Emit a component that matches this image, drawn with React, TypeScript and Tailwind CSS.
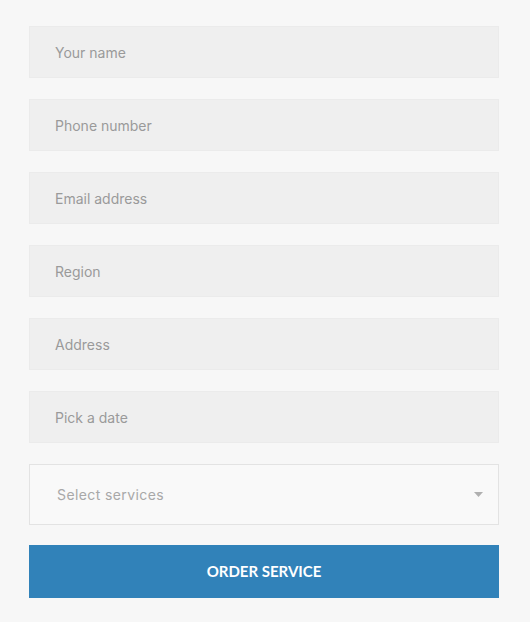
import React from "react";

const fields = ["Your name", "Phone number", "Email address", "Region", "Address", "Pick a date"];

export default function App() {
  return (
    <div className="min-h-[622px] w-full bg-[#f7f7f7] px-[29px] pt-[26px] pb-[24px]" style={{ fontFamily: "Inter, 'Open Sans', sans-serif" }}>
      <div className="flex flex-col gap-[21px]">
        {fields.map((f) => (
          <div key={f} className="h-[52px] w-[470px] bg-[#efefef] border border-[#ebebeb] flex items-center pl-[25px] text-[14px] text-[#9a9a9a]">
            {f}
          </div>
        ))}
        <div className="h-[61px] w-[470px] bg-[#f9f9f9] border border-[#e3e3e3] flex items-center justify-between pl-[27px] pr-[15px] text-[14px] text-[#a8a8a8] tracking-[0.4px]">
          <span>Select services</span>
          <svg width="9" height="5" viewBox="0 0 9 5"><path d="M0 0h9L4.5 5z" fill="#b0b0b0" /></svg>
        </div>
      </div>
      <div className="mt-[20px] h-[53px] w-[470px] bg-[#3182b9] flex items-center justify-center text-white font-bold text-[15px]" style={{ fontFamily: "Lato, 'Open Sans', sans-serif" }}>
        ORDER SERVICE
      </div>
    </div>
  );
}
